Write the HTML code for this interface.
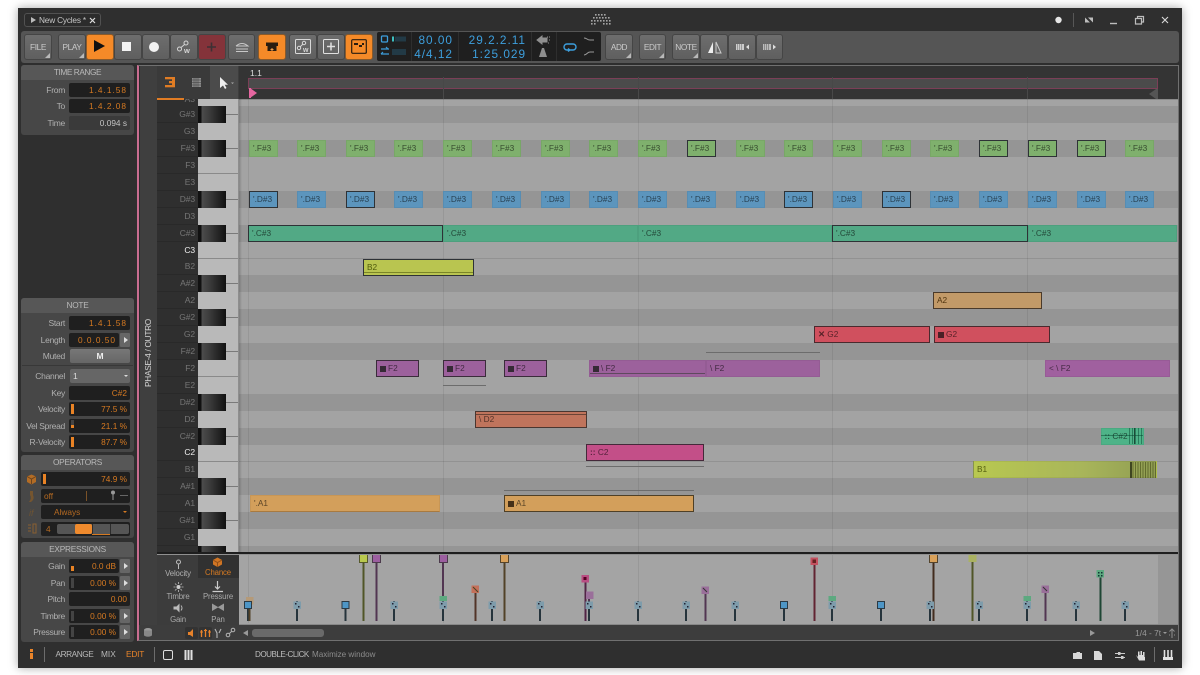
<!DOCTYPE html>
<html><head><meta charset="utf-8"><title>New Cycles</title>
<style>
html,body{margin:0;padding:0;background:#fff}
body{width:1200px;height:675px;overflow:hidden;position:relative;font-family:"Liberation Sans",sans-serif;font-size:8.3px;color:#b8b8b8}
div,span,i,svg{position:absolute;display:block;box-sizing:border-box}
i{font-style:normal}
#w{left:18px;top:8px;width:1164px;height:660px;background:#2f2f2f;box-shadow:0 0 9px rgba(0,0,0,.35);overflow:hidden}
#r{left:-18px;top:-8px;width:1200px;height:675px;filter:blur(.25px)}
.b{top:34px;height:26px;background:linear-gradient(#6d6d6d,#5f5f5f);border:1px solid #454545;border-radius:3px;text-align:center;line-height:24px;color:#cbcbcb;font-size:8.3px;letter-spacing:-.4px}
.c:after{content:"";position:absolute;right:1px;bottom:1px;border-left:5px solid transparent;border-bottom:5px solid #b9b9b9}
.o{background:#f58a28;border-color:#8a5a2a}
.p{background:#474747;border-radius:3px}
.ph{left:0;right:0;top:0;height:15px;background:#575757;border-radius:3px 3px 0 0;text-align:center;line-height:15px;color:#b9b9b9;font-size:8.3px;letter-spacing:-.25px}
.l{width:46px;left:19px;text-align:right;color:#b0b0b0;line-height:14px;height:14px;letter-spacing:-.28px;font-size:8.5px}
.f{left:69px;width:61px;height:14px;background:#1f1f1f;border-radius:2px;text-align:right;padding-right:3px;color:#d67a22;line-height:14px}
.m{letter-spacing:1px}
.ar{left:120px;width:10px;height:14px;background:#666;border-radius:1px}
.ar:after{content:"";position:absolute;left:3.5px;top:4px;border-left:4px solid #ddd;border-top:3px solid transparent;border-bottom:3px solid transparent}
.vb{left:71px;width:2.5px;height:10px;background:#e98325}
.dr{left:239px;width:939px;height:17px;background:#959595}
.vl{width:1px;top:99px;height:525px;background:rgba(0,0,0,.07)}
.hl{left:239px;width:939px;height:1px;background:rgba(0,0,0,.1)}
.k{left:157px;width:41px;height:17px;text-align:right;padding-right:3px;line-height:17px;color:#767676;background:#2f2f2f;border-bottom:1px solid #292929;font-size:8.5px;letter-spacing:-.1px}
.kb{left:198px;width:28px;height:17px;background:linear-gradient(90deg,#111 0 3px,#4c4c4c 4px,#3a3a3a 12px,#111 28px)}
.kl{left:226px;width:12px;height:1px;background:#7a7a7a}
.kw{left:198px;width:40px;height:1px;background:#8a8a8a}
.n{height:17px;line-height:15px;font-size:8.3px;color:rgba(0,0,0,.58);padding-left:3px;white-space:nowrap;overflow:hidden;border:1px solid rgba(0,0,0,.05)}
.s{border:1px solid #2e3236}
.g{top:140px;width:29px;background:#7fb06d}
.u{top:191px;width:29px;background:#5c95bd}
.t{top:224.6px;background:#52a985}
.pu{top:360px;background:#9c619c}
.sq{display:inline-block;position:static;width:6px;height:6px;background:#352a35;margin-right:2px;vertical-align:-0.5px}
.ul{height:1px;background:#6c6c6c}
.bl{color:#3d9fdd;font-size:11.8px;letter-spacing:1px;text-align:right;line-height:14px;height:14px}
.ex{text-align:center;width:40px;color:#a9a9a9;font-size:7.8px;letter-spacing:-.15px}
.st{line-height:11px;font-size:8.3px;white-space:nowrap;top:649px}
</style></head><body>
<div id="w"><div id="r">

<!-- title bar -->
<div style="left:24px;top:13px;width:77px;height:14px;border:1px solid #515151;border-radius:3px;background:#2c2c2c"></div>
<div style="left:31px;top:17px;border-left:5px solid #bbb;border-top:3px solid transparent;border-bottom:3px solid transparent"></div>
<div style="left:39px;top:14px;line-height:13px;color:#c6c6c6;font-size:8.3px;letter-spacing:-.2px;white-space:nowrap">New Cycles *</div>
<svg style="left:89px;top:17px" width="7" height="7"><path d="M1 1L6 6M6 1L1 6" stroke="#ddd" stroke-width="1.2"/></svg>
<svg style="left:588px;top:13px" width="26" height="13"><g fill="#a5a5a5"><rect x="7" y="1" width="1.6" height="1.6"/><rect x="10" y="1" width="1.6" height="1.6"/><rect x="13" y="1" width="1.6" height="1.6"/><rect x="16" y="1" width="1.6" height="1.6"/><rect x="5" y="4" width="1.6" height="1.6"/><rect x="8" y="4" width="1.6" height="1.6"/><rect x="11" y="4" width="1.6" height="1.6"/><rect x="14" y="4" width="1.6" height="1.6"/><rect x="17" y="4" width="1.6" height="1.6"/><rect x="20" y="4" width="1.6" height="1.6"/><rect x="3" y="7" width="1.6" height="1.6"/><rect x="6" y="7" width="1.6" height="1.6"/><rect x="9" y="7" width="1.6" height="1.6"/><rect x="12" y="7" width="1.6" height="1.6"/><rect x="15" y="7" width="1.6" height="1.6"/><rect x="18" y="7" width="1.6" height="1.6"/><rect x="21" y="7" width="1.6" height="1.6"/><rect x="3" y="10" width="1.6" height="1.6"/><rect x="6" y="10" width="1.6" height="1.6"/><rect x="15" y="10" width="1.6" height="1.6"/><rect x="18" y="10" width="1.6" height="1.6"/><rect x="21" y="10" width="1.6" height="1.6"/></g></svg>
<svg style="left:1050px;top:10px" width="125" height="20" fill="none" stroke="#bdbdbd"><circle cx="8.5" cy="10" r="3.2" fill="#e6e6e6" stroke="none"/><path d="M23.5 3V17" stroke="#575757"/><path d="M35 8V13H40ZM43 13V8H38Z" fill="#bdbdbd" stroke="none" transform="translate(0,-.5)"/><path d="M60 13.5H67" stroke-width="1.4"/><path d="M85.5 8.5h6v5.5h-6zM87.5 8.5v-2h6v5.5h-2" stroke-width="1.2"/><path d="M112 7l6 6M118 7l-6 6" stroke="#d8d8d8" stroke-width="1.1"/></svg>

<!-- toolbar -->
<div style="left:21px;top:31px;width:1158px;height:32px;background:#555;border-radius:3px"></div>
<div style="left:18px;top:63px;width:1164px;height:2px;background:#2e2e2e"></div>

<div class="b c" style="left:24px;width:28px">FILE</div>
<div class="b c" style="left:58px;width:28px">PLAY</div>
<div class="b o" style="left:86px;width:28px"></div>
<div style="left:94px;top:40px;border-left:11px solid #111;border-top:6px solid transparent;border-bottom:6px solid transparent"></div>
<div class="b" style="left:114px;width:28px"></div>
<div style="left:122px;top:42px;width:9px;height:9px;background:#f2f2f2"></div>
<div class="b" style="left:142px;width:28px"></div>
<div style="left:149px;top:41.5px;width:10px;height:10px;border-radius:50%;background:#f2f2f2"></div>
<div class="b" style="left:170px;width:28px"></div>
<svg style="left:176px;top:40px" width="17" height="14" fill="none" stroke="#d5d5d5"><circle cx="3.5" cy="9" r="2"/><circle cx="10" cy="3" r="2"/><path d="M5 7.5L8.5 4.5"/><text x="8" y="13" font-size="7.5" font-weight="bold" fill="#d5d5d5" stroke="none" font-family="Liberation Sans">w</text></svg>
<div class="b" style="left:198px;width:28px;background:#84333a"></div>
<svg style="left:205px;top:41px" width="13" height="12"><path d="M6.5 1.5V10.5M2 6H11" stroke="#3c3134" stroke-width="1.6"/></svg>
<div class="b" style="left:228px;width:27px"></div>
<svg style="left:234px;top:41px" width="16" height="11" fill="none" stroke="#c8c8c8"><path d="M2 5Q8 0 14 5H2M2 8H14M2 10.5H14"/></svg>
<div class="b o" style="left:258px;width:28px"></div>
<svg style="left:265px;top:40px" width="14" height="14"><path d="M1 2.5h12v3.5h-1.5v5h-9v-5H1z" fill="#2a1d10"/><path d="M7 8v3M5.5 9.5h3" stroke="#f0a050"/></svg>
<div class="b" style="left:289px;width:28px"></div>
<svg style="left:295px;top:39px" width="16" height="15" fill="none" stroke="#d8d8d8"><rect x=".5" y=".5" width="15" height="14" rx="1"/><circle cx="4" cy="9" r="1.7"/><circle cx="9" cy="4" r="1.7"/><path d="M5 8L8 5"/><text x="8" y="13" font-size="7" font-weight="bold" fill="#d5d5d5" stroke="none" font-family="Liberation Sans">w</text></svg>
<div class="b" style="left:317px;width:28px"></div>
<svg style="left:323px;top:39px" width="16" height="15" fill="none" stroke="#e0e0e0"><rect x=".5" y=".5" width="15" height="14" rx="1"/><path d="M8 3.5V11.5M4 7.5H12" stroke-width="1.5"/></svg>
<div class="b o" style="left:345px;width:28px"></div>
<svg style="left:351px;top:39px" width="16" height="15" fill="none" stroke="#2a1d10"><rect x=".7" y=".7" width="14.6" height="13.6" rx="1" stroke-width="1.2"/><rect x="3" y="4" width="4" height="2" fill="#2a1d10" stroke="none"/><rect x="8" y="6" width="3" height="2" fill="#2a1d10" stroke="none"/><rect x="11" y="4" width="2" height="2" fill="#2a1d10" stroke="none"/></svg>

<!-- display -->
<div style="left:377px;top:32px;width:224px;height:29px;background:#1f1f1f;border-radius:2px"></div>
<div style="left:411px;top:32px;width:1px;height:29px;background:#2e2e2e"></div>
<div style="left:458px;top:32px;width:1px;height:29px;background:#2e2e2e"></div>
<div style="left:531px;top:32px;width:1px;height:29px;background:#2e2e2e"></div>
<div style="left:556px;top:32px;width:1px;height:29px;background:#2e2e2e"></div>
<svg style="left:380px;top:34px" width="30" height="26" fill="none" stroke="#3d9fdd"><rect x="1.5" y="2" width="6" height="6" rx="1" stroke-width="1.3"/><rect x="12" y="2.5" width="2" height="5" fill="#3dc0c0" stroke="none"/><rect x="15" y="2.5" width="11" height="5" fill="#223a46" stroke="none"/><path d="M1 15H9M6 13l2 2M1 20H9M3 18l-2 2" stroke-width="1.2"/><rect x="12" y="15" width="14" height="6" fill="#223a46" stroke="none"/></svg>
<div class="bl" style="left:413px;width:40px;top:33px">80.00</div>
<div class="bl" style="left:413px;width:40px;top:47px">4/4,12</div>
<div class="bl" style="left:463px;width:63px;top:33px">29.2.2.11</div>
<div class="bl" style="left:463px;width:63px;top:47px">1:25.029</div>
<svg style="left:536px;top:34px" width="16" height="25"><path d="M1 6l5-4v2h5v4H6v2zM11 3h1M13 3h1M13 6h1M12 9h1" stroke="#8f8f8f" fill="#8f8f8f"/><path d="M3 23L6 14h2l3 9z" fill="#8f8f8f"/></svg>
<svg style="left:562px;top:34px" width="32" height="25" fill="none"><path d="M2 13a3 3 0 0 1 3-3h6a3 3 0 0 1 3 3 3 3 0 0 1-3 3H5a3 3 0 0 1-3-3M6 14.5l2 1.5-2 1.5" stroke="#3d9fdd" stroke-width="1.4"/><path d="M22 4c3 0 3 2 6 2h4M22 21c3 0 3-3 6-3h4" stroke="#999"/></svg>

<div class="b c" style="left:605px;width:28px">ADD</div>
<div class="b c" style="left:639px;width:27px">EDIT</div>
<div class="b c" style="left:672px;width:28px">NOTE</div>
<div class="b" style="left:700px;width:28px"></div>
<svg style="left:707px;top:41px" width="15" height="13"><path d="M6 1V12H1Z" fill="#eee"/><path d="M9 1V12H14Z" fill="none" stroke="#ccc"/></svg>
<div class="b" style="left:728px;width:28px"></div>
<svg style="left:736px;top:43px" width="14" height="8"><rect x="0" y="1" width="8" height="6" fill="#ccc"/><path d="M1.5 1V7M3.5 1V7M5.5 1V7" stroke="#777" stroke-width=".6"/><path d="M13 1.5V6.5L10 4z" fill="#ddd"/></svg>
<div class="b" style="left:756px;width:27px"></div>
<svg style="left:763px;top:43px" width="14" height="8"><rect x="0" y="1" width="8" height="6" fill="#bbb"/><path d="M1.5 1V7M3.5 1V7M5.5 1V7" stroke="#666" stroke-width=".6"/><path d="M10 1.5V6.5L13 4z" fill="#ddd"/></svg>

<!-- left panel: Time range -->
<div class="p" style="left:21px;top:65px;width:113px;height:70px"><div class="ph" style="letter-spacing:-.45px">TIME RANGE</div></div>
<div class="l" style="top:82.5px">From</div><div class="f m" style="top:82.5px">1.4.1.58</div>
<div class="l" style="top:99px">To</div><div class="f m" style="top:99px">1.4.2.08</div>
<div class="l" style="top:115.5px">Time</div><div class="f" style="top:115.5px;background:#3a3a3a;color:#c4c4c4">0.094 s</div>

<!-- Note -->
<div class="p" style="left:21px;top:298px;width:113px;height:154px"><div class="ph">NOTE</div></div>
<div style="left:22px;top:365px;width:111px;height:1px;background:#383838"></div>
<div class="l" style="top:316px">Start</div><div class="f m" style="top:316px">1.4.1.58</div>
<div class="l" style="top:332.5px">Length</div><div class="f m" style="top:332.5px;width:50px">0.0.0.50</div><div class="ar" style="top:332.5px"></div>
<div class="l" style="top:349px">Muted</div><div style="left:70px;top:349px;width:60px;height:14px;border-radius:2px;background:linear-gradient(#777,#666);text-align:center;line-height:14px;color:#eee;font-weight:bold;font-size:8.5px">M</div>
<div class="l" style="top:369px">Channel</div><div style="left:70px;top:369px;width:60px;height:14px;border-radius:2px;background:#666;line-height:14px;padding-left:3px;color:#ddd;font-size:8.5px">1</div><div style="left:124px;top:375px;border-top:2.5px solid #ddd;border-left:2.5px solid transparent;border-right:2.5px solid transparent"></div>
<div class="l" style="top:385.5px">Key</div><div class="f" style="top:385.5px">C#2</div>
<div class="l" style="top:402px">Velocity</div><div class="f" style="top:402px">77.5 %</div><div class="vb" style="top:404px"></div>
<div class="l" style="top:418.5px">Vel Spread</div><div class="f" style="top:418.5px">21.1 %</div><div class="vb" style="top:425px;height:3px"></div><div class="vb" style="top:420px;height:5px;background:#444"></div>
<div class="l" style="top:435px">R-Velocity</div><div class="f" style="top:435px">87.7 %</div><div class="vb" style="top:437px"></div>

<!-- Operators -->
<div class="p" style="left:21px;top:455px;width:113px;height:83px"><div class="ph">OPERATORS</div></div>
<svg style="left:26px;top:473px" width="12" height="62"><path d="M5.5 1.5L10 3.5V9L5.5 11.5 1 9V3.5Z" fill="#b36c25"/><path d="M1 3.5L5.5 6 10 3.5M5.5 6V11" stroke="#6d441d" fill="none"/><path d="M4 18h3v4q2 4-2 7H3q3-4 1-7z" fill="#75552f"/><text x="3" y="43" font-size="9" font-style="italic" fill="#6d5333" font-family="Liberation Sans">if</text><path d="M2 52h3M2 55h3M2 58h3M7 51h3v9H7z" stroke="#8a5f30" fill="none"/></svg>
<div class="f" style="left:41px;width:89px;top:472px">74.9 %</div><div class="vb" style="left:43px;top:474px"></div>
<div class="f" style="left:41px;width:89px;top:488.5px;text-align:left;padding-left:3px;color:#b56a22">off</div>
<div style="left:85.5px;top:491px;width:1px;height:10px;background:#7a5228"></div>
<svg style="left:110px;top:490px" width="20" height="11"><circle cx="3" cy="2.5" r="2" fill="#999"/><path d="M3 4V10" stroke="#999"/><path d="M10 5.5H18" stroke="#666"/></svg>
<div class="f" style="left:41px;width:89px;top:505px;text-align:left;padding-left:13px;color:#b56a22">Always</div>
<div style="left:123px;top:511px;border-top:2.5px solid #d67a22;border-left:2.5px solid transparent;border-right:2.5px solid transparent"></div>
<div class="f" style="left:41px;width:89px;top:522px;text-align:left;padding-left:5px;color:#b56a22">4</div>
<div style="left:57px;top:524px;width:72px;height:10px;background:#555;border-radius:2px"></div>
<div style="left:74.5px;top:523.5px;width:17px;height:10.5px;background:#ef8a2d;border-radius:2px"></div>
<div style="left:92px;top:524px;width:1px;height:10px;background:#2c2c2c"></div>
<div style="left:110px;top:524px;width:1px;height:10px;background:#2c2c2c"></div>
<div style="left:92px;top:534px;width:18px;height:1px;background:#d67a22"></div>

<!-- Expressions -->
<div class="p" style="left:21px;top:542px;width:113px;height:100px"><div class="ph">EXPRESSIONS</div></div>
<div class="l" style="top:559px">Gain</div><div class="f" style="top:559px;width:50px">0.0 dB</div><div class="ar" style="top:559px"></div><div class="vb" style="top:566px;height:5px"></div>
<div class="l" style="top:575.5px">Pan</div><div class="f" style="top:575.5px;width:50px">0.00 %</div><div class="ar" style="top:575.5px"></div><div class="vb" style="top:578px;background:#444"></div>
<div class="l" style="top:592px">Pitch</div><div class="f" style="top:592px">0.00</div>
<div class="l" style="top:609px">Timbre</div><div class="f" style="top:609px;width:50px">0.00 %</div><div class="ar" style="top:609px"></div><div class="vb" style="top:611px;background:#444"></div>
<div class="l" style="top:625px">Pressure</div><div class="f" style="top:625px;width:50px">0.00 %</div><div class="ar" style="top:625px"></div><div class="vb" style="top:627px;background:#444"></div>

<!-- Editor -->
<div style="left:137px;top:65px;width:1042px;height:576px;background:#3d3d3d;border:1px solid #707070;border-left:2px solid #c96d91"></div>
<div style="left:139px;top:66px;width:18px;height:574px;background:#3f3f3f;border-left:1px solid #2c2c2c"></div>
<div style="left:100px;top:346px;width:96px;height:14px;line-height:14px;text-align:center;color:#d4d4d4;font-size:8.3px;letter-spacing:-.3px;transform:rotate(-90deg);white-space:nowrap">PHASE-4 / OUTRO</div>

<!-- Tabs -->
<div style="left:157px;top:66px;width:81px;height:33px;background:#3a3a3a"></div>
<div style="left:210px;top:66px;width:28px;height:33px;background:#4b4b4b"></div>
<svg style="left:165px;top:77px" width="10" height="11" fill="#e07c24"><rect x="0" y="0" width="10" height="2.3"/><rect x="4" y="4" width="6" height="2.3"/><rect x="0" y="8" width="10" height="2.3"/><rect x="7" y="0" width="3" height="10"/></svg>
<svg style="left:192px;top:78px" width="9" height="9"><rect width="9" height="9" fill="#8d8d8d"/><path d="M2 0V9M4 0V9M6 0V9M0 2H9M0 4.5H9M0 7H9" stroke="#3a3a3a" stroke-width=".5"/></svg>
<svg style="left:219px;top:76px" width="15" height="14"><path d="M1 1V12L4 9.5 6 13 7.5 12 5.7 8.8H9Z" fill="#eee"/><path d="M12 6.5h3L13.5 8Z" fill="#aaa"/></svg>

<!-- Ruler -->
<div style="left:239px;top:66px;width:939px;height:33px;background:#343434"></div>
<div style="left:250px;top:69px;line-height:9px;color:#ddd;font-size:8.5px">1.1</div>
<div style="left:248px;top:78px;width:910px;height:11px;background:#4b4b4b;border:1px solid #7b3f57"></div>
<div style="left:443px;top:77px;width:1px;height:22px;background:#484848"></div>
<div style="left:638px;top:77px;width:1px;height:22px;background:#484848"></div>
<div style="left:832px;top:77px;width:1px;height:22px;background:#484848"></div>
<div style="left:1027px;top:77px;width:1px;height:22px;background:#484848"></div>
<div style="left:249px;top:88px;width:2px;height:10px;background:#e566a0"></div>
<div style="left:250px;top:88px;border-left:7px solid #e566a0;border-top:5px solid transparent;border-bottom:5px solid transparent"></div>
<div style="left:1149px;top:89px;border-right:7px solid #555;border-top:5px solid transparent;border-bottom:5px solid transparent"></div>
<div style="left:1156px;top:89px;width:2px;height:10px;background:#555"></div>

<!-- Grid -->
<div style="left:239px;top:99px;width:939px;height:453px;background:#a3a3a3"></div>
<div class="dr" style="top:106.2px"></div><div class="dr" style="top:140px"></div><div class="dr" style="top:190.8px"></div><div class="dr" style="top:224.6px"></div><div class="dr" style="top:275.3px"></div><div class="dr" style="top:309px"></div><div class="dr" style="top:343px"></div><div class="dr" style="top:393.6px"></div><div class="dr" style="top:427.5px"></div><div class="dr" style="top:478.2px"></div><div class="dr" style="top:512px"></div><div class="dr" style="top:546px;height:6px"></div>
<div class="hl" style="top:258px"></div><div class="hl" style="top:461px"></div>
<div style="left:239px;top:99px;width:939px;height:1px;background:#8a8a8a"></div>
<div style="left:239px;top:99px;width:3px;height:453px;background:linear-gradient(90deg,rgba(0,0,0,.18),transparent)"></div>
<div class="vl" style="left:248px"></div><div class="vl" style="left:443px"></div><div class="vl" style="left:638px"></div><div class="vl" style="left:832px"></div><div class="vl" style="left:1027px"></div>

<!-- Piano -->
<div style="left:198px;top:99px;width:41px;height:453px;background:#b9b9b9;border-right:1px solid #8e8e8e"></div>
<div style="left:157px;top:99px;width:41px;height:453px;background:#2f2f2f;overflow:hidden"><div style="right:3px;top:-5px;line-height:10px;color:#767676;font-size:8.5px">A3</div></div>
<div style="left:157px;top:98px;width:27px;height:1.5px;background:#e07c24"></div>
<div class="k" style="top:106.2px">G#3</div><div class="k" style="top:123.1px">G3</div><div class="k" style="top:140px">F#3</div><div class="k" style="top:156.9px">F3</div><div class="k" style="top:173.8px">E3</div><div class="k" style="top:190.8px">D#3</div><div class="k" style="top:207.7px">D3</div><div class="k" style="top:224.6px">C#3</div><div class="k" style="top:241.5px;color:#eee">C3</div><div class="k" style="top:258.4px">B2</div><div class="k" style="top:275.3px">A#2</div><div class="k" style="top:292.2px">A2</div><div class="k" style="top:309px">G#2</div><div class="k" style="top:326px">G2</div><div class="k" style="top:343px">F#2</div><div class="k" style="top:359.8px">F2</div><div class="k" style="top:376.7px">E2</div><div class="k" style="top:393.6px">D#2</div><div class="k" style="top:410.6px">D2</div><div class="k" style="top:427.5px">C#2</div><div class="k" style="top:444.4px;color:#eee">C2</div><div class="k" style="top:461.3px">B1</div><div class="k" style="top:478.2px">A#1</div><div class="k" style="top:495.2px">A1</div><div class="k" style="top:512px">G#1</div><div class="k" style="top:529px">G1</div>
<div class="kb" style="top:106.2px"></div><div class="kb" style="top:140px"></div><div class="kb" style="top:190.8px"></div><div class="kb" style="top:224.6px"></div><div class="kb" style="top:275.3px"></div><div class="kb" style="top:309px"></div><div class="kb" style="top:343px"></div><div class="kb" style="top:393.6px"></div><div class="kb" style="top:427.5px"></div><div class="kb" style="top:478.2px"></div><div class="kb" style="top:512px"></div><div class="kb" style="top:546px;height:6px"></div>
<div class="kl" style="top:114px"></div><div class="kl" style="top:148px"></div><div class="kl" style="top:199px"></div><div class="kl" style="top:233px"></div><div class="kl" style="top:283px"></div><div class="kl" style="top:317px"></div><div class="kl" style="top:351px"></div><div class="kl" style="top:402px"></div><div class="kl" style="top:436px"></div><div class="kl" style="top:486px"></div><div class="kl" style="top:520px"></div>
<div class="kw" style="top:173px"></div><div class="kw" style="top:258px"></div><div class="kw" style="top:376px"></div><div class="kw" style="top:461px"></div>

<!-- F#3 notes -->
<i class="n g" style="left:249px">'.F#3</i><i class="n g" style="left:297px">'.F#3</i><i class="n g" style="left:346px">'.F#3</i><i class="n g" style="left:394px">'.F#3</i><i class="n g" style="left:443px">'.F#3</i><i class="n g" style="left:492px">'.F#3</i><i class="n g" style="left:541px">'.F#3</i><i class="n g" style="left:589px">'.F#3</i><i class="n g" style="left:638px">'.F#3</i><i class="n g s" style="left:687px">'.F#3</i><i class="n g" style="left:736px">'.F#3</i><i class="n g" style="left:784px">'.F#3</i><i class="n g" style="left:833px">'.F#3</i><i class="n g" style="left:882px">'.F#3</i><i class="n g" style="left:930px">'.F#3</i><i class="n g s" style="left:979px">'.F#3</i><i class="n g s" style="left:1028px">'.F#3</i><i class="n g s" style="left:1077px">'.F#3</i><i class="n g" style="left:1125px">'.F#3</i>
<!-- D#3 notes -->
<i class="n u s" style="left:249px">'.D#3</i><i class="n u" style="left:297px">'.D#3</i><i class="n u s" style="left:346px">'.D#3</i><i class="n u" style="left:394px">'.D#3</i><i class="n u" style="left:443px">'.D#3</i><i class="n u" style="left:492px">'.D#3</i><i class="n u" style="left:541px">'.D#3</i><i class="n u" style="left:589px">'.D#3</i><i class="n u" style="left:638px">'.D#3</i><i class="n u" style="left:687px">'.D#3</i><i class="n u" style="left:736px">'.D#3</i><i class="n u s" style="left:784px">'.D#3</i><i class="n u" style="left:833px">'.D#3</i><i class="n u s" style="left:882px">'.D#3</i><i class="n u" style="left:930px">'.D#3</i><i class="n u" style="left:979px">'.D#3</i><i class="n u" style="left:1028px">'.D#3</i><i class="n u" style="left:1077px">'.D#3</i><i class="n u" style="left:1125px">'.D#3</i>
<!-- C#3 -->
<i class="n t s" style="left:248px;width:195px">'.C#3</i><i class="n t" style="left:443px;width:195px">'.C#3</i><i class="n t" style="left:638px;width:194px">'.C#3</i><i class="n t s" style="left:832px;width:196px">'.C#3</i><i class="n t" style="left:1028px;width:149px">'.C#3</i>
<!-- others -->
<i class="n s" style="left:363px;top:258.6px;width:111px;background:#b9c550;color:rgba(60,70,0,.85)">B2<div style="left:0;right:0;bottom:2px;height:1px;background:rgba(60,70,0,.5)"></div></i>
<i class="n s" style="left:933px;top:292.2px;width:109px;background:#c29a68;color:rgba(60,35,0,.85);border-color:#4a3a2a">A2</i>
<i class="n s" style="left:814px;top:326px;width:116px;background:#d0505e;border-color:#4a2a2e"><b>✕</b> G2</i>
<i class="n s" style="left:934px;top:326px;width:116px;background:#d0505e;border-color:#4a2a2e"><span class="sq" style="background:#4a2026"></span>G2</i>
<i class="n s pu" style="left:376px;width:43px;border-color:#3a2c3a"><span class="sq"></span>F2</i>
<i class="n s pu" style="left:443px;width:43px;border-color:#3a2c3a"><span class="sq"></span>F2</i>
<i class="n s pu" style="left:504px;width:43px;border-color:#3a2c3a"><span class="sq"></span>F2</i>
<i class="n pu" style="left:589px;width:117px"><span class="sq"></span>\ F2<div style="left:0;right:0;top:12px;height:1px;background:#5e4a5e"></div></i>
<i class="n pu" style="left:706px;width:114px">\ F2</i>
<i class="n pu" style="left:1045px;width:125px;background:#a0609f">&lt; \ F2</i>
<i class="n s" style="left:475px;top:410.6px;width:112px;background:#c0745c;border-color:#4a3630"><div style="left:0;right:0;top:2px;height:1px;background:#6b4436"></div>\ D2</i>
<i class="n s" style="left:586px;top:444.4px;width:118px;background:#c34f88;border-color:#45293a"><b>::</b> C2</i>
<i class="n" style="left:250px;top:495.2px;width:190px;background:#d39f5b;border-bottom-color:#a87a40">'.A1</i>
<i class="n s" style="left:504px;top:495.2px;width:190px;background:#d39f5b;border-color:#4f4026"><span class="sq" style="background:#453018"></span>A1</i>
<i class="n" style="left:1100.5px;top:427.5px;width:43px;background:#4eb388"><b>::</b> C#2</i>
<div style="left:1101px;top:435px;width:42px;height:1px;background:rgba(0,60,40,.45)"></div>
<div style="left:1129px;top:428px;width:13px;height:16px;background:repeating-linear-gradient(90deg,rgba(0,60,40,.45) 0 1px,transparent 1px 3px)"></div>
<div style="left:1133.5px;top:428px;width:1.5px;height:16px;background:#1c4a38"></div>
<i class="n" style="left:973px;top:461.3px;width:184px;background:linear-gradient(90deg,#b8c850,#a8b55a 60%,#8f9c52);color:rgba(60,70,0,.8)">B1</i>
<div style="left:1130px;top:462px;width:27px;height:16px;background:repeating-linear-gradient(90deg,rgba(50,55,10,.5) 0 1px,transparent 1px 2.5px)"></div>
<div style="left:1130px;top:462px;width:2px;height:16px;background:#3f4620"></div>
<!-- thin lines -->
<div class="ul" style="left:706px;top:352px;width:114px"></div>
<div class="ul" style="left:443px;top:385px;width:43px"></div>
<div class="ul" style="left:586px;top:466px;width:118px"></div>
<div class="ul" style="left:504px;top:490px;width:190px"></div>

<!-- divider -->
<div style="left:157px;top:552px;width:1021px;height:2px;background:#1e1e1e"></div>
<div style="left:157px;top:554px;width:1021px;height:1px;background:#909090"></div>

<!-- Lane -->
<div style="left:239px;top:555px;width:939px;height:70px;background:#a4a4a4"></div>
<div style="left:1158px;top:555px;width:20px;height:70px;background:#969696"></div>
<div class="vl" style="left:248px;top:555px;height:68px"></div><div class="vl" style="left:443px;top:555px;height:68px"></div><div class="vl" style="left:638px;top:555px;height:68px"></div><div class="vl" style="left:832px;top:555px;height:68px"></div><div class="vl" style="left:1027px;top:555px;height:68px"></div>
<div style="left:239px;top:624px;width:939px;height:1px;background:#888"></div>
<svg style="left:239px;top:555px" width="939" height="70">
<defs><g id="h"><rect x="-3.5" y="-3.5" width="7.5" height="7.5" fill="#7e9cab"/><rect x="-2" y="-2" width="1.5" height="1.5" fill="#223"/><rect x="1" y="1" width="1.5" height="1.5" fill="#223"/></g>
<g id="q"><rect x="-4" y="-4" width="8" height="8" fill="#2c3a44"/><rect x="-3" y="-3" width="6" height="6" fill="#4e96c6"/></g></defs>
<path d="M9 46V66M58 46V66M106.5 46V66M155 46V66M204 46V66M253 46V66M301 46V66M350 46V66M399 46V66M447 46V66M496 46V66M545 46V66M593 46V66M642 46V66M691 46V66M740 46V66M788 46V66M837 46V66M886 46V66" stroke="#26343c" stroke-width="2" fill="none"/>
<g fill="none" stroke-width="2"><path d="M124.5 3V66" stroke="#515628"/><path d="M137.5 3V66" stroke="#523652"/><path d="M204 3V46" stroke="#523652"/><path d="M265.5 3V66" stroke="#524228"/><path d="M236.5 36V66" stroke="#523428"/><path d="M346.5 24V66" stroke="#522446"/><path d="M350 40V46" stroke="#523652"/><path d="M466.5 36V66" stroke="#523652"/><path d="M575.5 6V66" stroke="#622432"/><path d="M694.5 3V66" stroke="#422c1e"/><path d="M733.5 3V66" stroke="#515628"/><path d="M806.5 35V66" stroke="#523652"/><path d="M861.5 19V66" stroke="#1e4634"/><path d="M10.5 44V66" stroke="#524228"/></g>
<rect x="7" y="42" width="7.5" height="7.5" fill="#b59a78"/>
<use href="#q" x="9" y="50"/><use href="#h" x="58" y="50"/><use href="#q" x="106.5" y="50"/><use href="#h" x="155" y="50"/><rect x="200.5" y="41" width="7.5" height="5" fill="#5da980"/><use href="#h" x="204" y="50"/><use href="#h" x="253" y="50"/><use href="#h" x="301" y="50"/><use href="#h" x="350" y="50"/><use href="#h" x="399" y="50"/><use href="#h" x="447" y="50"/><use href="#h" x="496" y="50"/><use href="#q" x="545" y="50"/><rect x="589.5" y="41" width="7.5" height="5" fill="#5da980"/><use href="#h" x="593" y="50"/><use href="#q" x="642" y="50"/><use href="#h" x="691" y="50"/><use href="#h" x="740" y="50"/><rect x="784.5" y="41" width="7.5" height="5" fill="#5da980"/><use href="#h" x="788" y="50"/><use href="#h" x="837" y="50"/><use href="#h" x="886" y="50"/>
<rect x="120.5" y="-.5" width="8" height="8" fill="#b9c94e" stroke="#56592c"/>
<rect x="133.5" y="-.5" width="8" height="8" fill="#9c5fa0" stroke="#4c3a4c"/>
<rect x="200.5" y="-.5" width="8" height="8" fill="#9c5fa0" stroke="#4c3a4c"/>
<rect x="261.5" y="-.5" width="8" height="8" fill="#d9a15a" stroke="#54442c"/>
<rect x="232.5" y="30.5" width="7.5" height="7.5" fill="#c4705a"/><path d="M234 32l5 5" stroke="#442"/>
<rect x="342.5" y="20" width="7.5" height="7.5" fill="#b94d82"/><rect x="344.5" y="22" width="3" height="3" fill="#502"/>
<rect x="347" y="36.5" width="7.5" height="7.5" fill="#9a6f9a"/>
<rect x="462.5" y="31.5" width="7.5" height="7.5" fill="#9a6f9a"/><path d="M464 33l4 4" stroke="#333"/>
<rect x="571.5" y="2.5" width="7.5" height="7.5" fill="#c4505f"/><rect x="573.5" y="4.5" width="3.5" height="3.5" fill="#622"/>
<rect x="690.5" y="-.5" width="8" height="8" fill="#d9a15a" stroke="#54442c"/>
<rect x="729.5" y="-1" width="8" height="8" fill="#aab262"/>
<rect x="802.5" y="30.5" width="7.5" height="7.5" fill="#9a6f9a"/><path d="M804 32l4 4" stroke="#333"/>
<rect x="857.5" y="15" width="7.5" height="7.5" fill="#5da980"/><rect x="859" y="17" width="1.5" height="1.5" fill="#133"/><rect x="862" y="17" width="1.5" height="1.5" fill="#133"/><rect x="859" y="20" width="1.5" height="1.5" fill="#133"/><rect x="862" y="20" width="1.5" height="1.5" fill="#133"/>
</svg>

<!-- Lane label section -->
<div style="left:157px;top:555px;width:82px;height:70px;background:#3c3c3c"></div>
<div style="left:198px;top:555px;width:41px;height:23px;background:#313131"></div>
<svg style="left:157px;top:555px" width="82" height="60" fill="none"><circle cx="21.5" cy="7" r="2" stroke="#bbb"/><path d="M21.5 9V14" stroke="#bbb"/><path d="M60.5 2.5L65 5V9.5L60.5 12 56 9.5V5Z" fill="#d07524"/><path d="M56 5l4.5 2.5L65 5M60.5 7.5V12" stroke="#8f4f18"/><circle cx="21.5" cy="32" r="2" fill="#ccc"/><path d="M21.5 27V29M21.5 35V37M16.5 32H18.5M24.5 32H26.5M18 28.5l1.5 1.5M25 28.5L23.5 30M18 35.5L19.5 34M25 35.5L23.5 34" stroke="#bbb" stroke-width=".8"/><path d="M60.5 26V34M58 31.5l2.5 2.5 2.5-2.5M55.5 36.5H66" stroke="#ccc" stroke-width="1.2"/><path d="M16.5 51.5h3l3-3v9l-3-3h-3z" fill="#bbb"/><path d="M24 50.5Q26 53 24 55.5" stroke="#bbb"/><path d="M55 48.5L61 52 67 48.5V56L61 52.5 55 56Z" fill="#999"/></svg>
<div class="ex" style="left:158px;top:569px;color:#b0b0b0">Velocity</div>
<div class="ex" style="left:198px;top:568px;color:#d67a22">Chance</div>
<div class="ex" style="left:158px;top:592px">Timbre</div>
<div class="ex" style="left:198px;top:592px">Pressure</div>
<div class="ex" style="left:158px;top:615px">Gain</div>
<div class="ex" style="left:198px;top:615px">Pan</div>

<!-- Bottom of editor -->
<div style="left:139px;top:625px;width:1039px;height:15px;background:#3d3d3d"></div>
<svg style="left:143px;top:627px" width="100" height="13" fill="none"><ellipse cx="5" cy="3" rx="4" ry="2" fill="#9a9a9a"/><path d="M1 3.5V8.5Q5 11 9 8.5V3.5" fill="#888"/><rect x="42" y="0" width="13" height="12" rx="2" fill="#333"/><path d="M45 5h2l3-3v8l-3-2h-2z" fill="#e8822a"/><rect x="56" y="0" width="13" height="12" rx="2" fill="#333"/><path d="M58.5 3V10M62.5 2V10M66.5 3V10" stroke="#e8822a" stroke-width="1.3"/><path d="M57 5h3M61 3.5h3M65 5h3" stroke="#e8822a"/><path d="M72 2l2 4v5M78 2l-2 4" stroke="#b5b5b5" stroke-width="1.1"/><circle cx="85" cy="8" r="1.8" stroke="#b5b5b5"/><circle cx="90" cy="3" r="1.8" stroke="#b5b5b5"/><path d="M86.5 6.5L88.5 4.5" stroke="#b5b5b5"/></svg>
<div style="left:243px;top:630px;border-right:5px solid #999;border-top:3px solid transparent;border-bottom:3px solid transparent"></div>
<div style="left:252px;top:629px;width:72px;height:8px;background:#6a6a6a;border-radius:3px"></div>
<div style="left:1090px;top:630px;border-left:5px solid #999;border-top:3px solid transparent;border-bottom:3px solid transparent"></div>
<div style="left:1120px;top:627px;width:41px;text-align:right;line-height:12px;color:#999;white-space:nowrap;font-size:8.3px">1/4 - 7t</div>
<div style="left:1163px;top:632px;border-top:2.5px solid #999;border-left:2px solid transparent;border-right:2px solid transparent"></div>
<svg style="left:1168px;top:628px" width="8" height="10" fill="none" stroke="#8f8f8f"><path d="M4 10V1M1.5 3.5L4 1l2.5 2.5M1 7H2M6 7H7"/></svg>

<!-- Status bar -->
<div style="left:30px;top:649px;width:3px;height:3px;background:#e8842a"></div>
<div style="left:30px;top:653px;width:3px;height:6px;background:#e8842a"></div>
<div style="left:44px;top:647px;width:1px;height:15px;background:#6c6c6c"></div>
<div class="st" style="left:55.5px;color:#b8b8b8;letter-spacing:-.45px">ARRANGE</div>
<div class="st" style="left:101px;color:#b8b8b8">MIX</div>
<div class="st" style="left:126px;color:#e8842a;letter-spacing:-.2px">EDIT</div>
<div style="left:154px;top:647px;width:1px;height:15px;background:#6c6c6c"></div>
<div style="left:163px;top:650px;width:10px;height:10px;border:1.5px solid #ddd;border-radius:2px"></div>
<svg style="left:184px;top:650px" width="9" height="10"><path d="M1.5 0V10M4.5 0V10M7.5 0V10" stroke="#e0e0e0" stroke-width="2"/></svg>
<div class="st" style="left:255px;color:#bdbdbd;font-size:8.1px;letter-spacing:-.5px">DOUBLE-CLICK</div>
<div class="st" style="left:312px;color:#8c8c8c;font-size:8.1px">Maximize window</div>
<svg style="left:1072px;top:650px" width="80" height="11"><path d="M1 3h3l1-1h3v1h2v6H1z" fill="#d8d8d8"/><path d="M22 1h5l3 3v6h-8z" fill="#d8d8d8"/><path d="M43 3.5h10M43 7.5h10" stroke="#ccc"/><rect x="46" y="2" width="2.5" height="3" fill="#ccc"/><rect x="49" y="6" width="2.5" height="3" fill="#ccc"/><path d="M64 5l2 2V1.5h1.500V5h1V1h1.500v4h1V2h1.500v5h.5v3.500h-6z" fill="#ddd"/></svg>
<div style="left:1154px;top:647px;width:1px;height:15px;background:#6c6c6c"></div>
<svg style="left:1163px;top:650px" width="10" height="10"><path d="M1.5 0V10M5 0V10M8.5 0V10" stroke="#e2e2e2" stroke-width="1.6"/><rect x="0" y="7" width="10" height="3" fill="#e2e2e2"/></svg>

</div></div>
</body></html>
